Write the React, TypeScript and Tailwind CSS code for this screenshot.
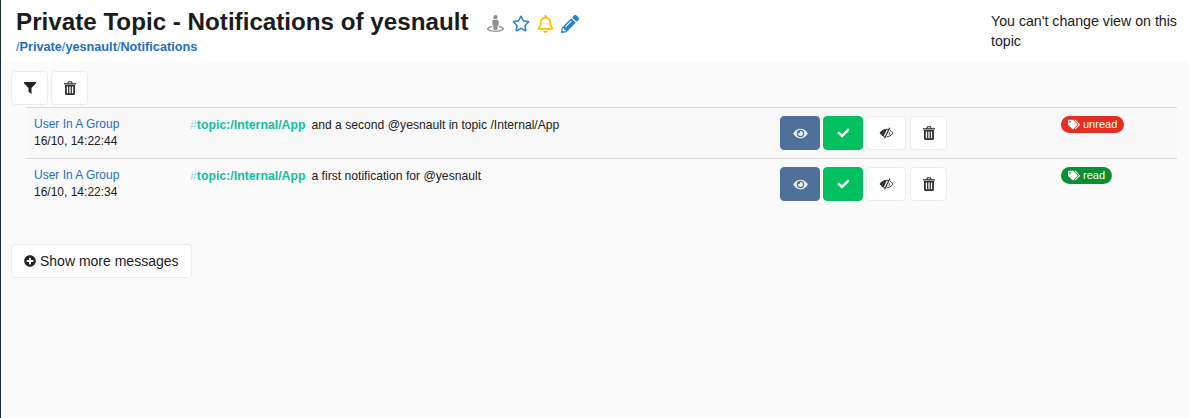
import { FaRegStar, FaRegBell, FaPencilAlt, FaEye, FaCheck, FaTags, FaPlusCircle, FaStreetView } from "react-icons/fa";
import type { ReactNode } from "react";

const mensajes = [
  {
    fecha: "16/10, 14:22:44",
    texto: "and a second @yesnault in topic /Internal/App",
    etiqueta: "unread",
    color: "bg-[#e52d20]",
    fila: "bg-[#f8f8f8]",
  },
  {
    fecha: "16/10, 14:22:34",
    texto: "a first notification for @yesnault",
    etiqueta: "read",
    color: "bg-[#0a8f32]",
    fila: "",
  },
];

function Boton({ children, className }: { children: ReactNode; className: string }) {
  return (
    <div className={`flex h-[34px] items-center justify-center rounded-[4px] border ${className}`}>
      {children}
    </div>
  );
}

// embudo macizo
function Filtro() {
  return (
    <svg viewBox="0 0 12 12" className="h-[12px] w-[12px] text-[#222]" fill="currentColor">
      <path d="M0 0h12v1.2L7.5 6v6L4.5 9.8V6L0 1.2z" />
    </svg>
  );
}

// papelera con barras, las de los paquetes son mas finas
function Papelera() {
  return (
    <svg viewBox="0 0 12 14" className="h-[14px] w-[12px] text-[#333]" fill="currentColor">
      <path d="M0 2.2h12v1.3H0z" />
      <path d="M3.8 2.5 4.5.7h3l.7 1.8" fill="none" stroke="currentColor" strokeWidth="1.1" />
      <path fillRule="evenodd" d="M1 4h10v8.5A1.5 1.5 0 0 1 9.500 14h-7A1.500 1.500 0 0 1 1 12.500zM2.800 5.500v6.800h1.300V5.500zM5.350 5.500v6.800h1.300V5.500zM7.900 5.500v6.800h1.300V5.500z" />
    </svg>
  );
}

// ojo tachado: mitad izquierda llena, mitad derecha en linea
function OjoTachado() {
  return (
    <svg viewBox="0 0 16 12" className="h-[12px] w-[15px] text-[#333]">
      <path d="M1 6C3 3.200 5.500 2 8 2s5 1.200 7 4c-2 2.800-4.500 4-7 4S3 8.800 1 6z" fill="none" stroke="currentColor" strokeWidth="1" />
      <path d="M1 6C3 3.200 5.500 2 8 2h.5L5 9.500C3.500 9 2.200 7.800 1 6z" fill="currentColor" />
      <path d="M10.500 4.500a3 3 0 0 1 0 3.500" fill="none" stroke="currentColor" strokeWidth="1" />
      <path d="M12.500.5 7 11.500" fill="none" stroke="#fff" strokeWidth="1" />
      <path d="M11.500.5 6 11.500" fill="none" stroke="currentColor" strokeWidth="1.300" />
    </svg>
  );
}

export default function App() {
  return (
    <div className="flex h-[418px] w-[1189px] overflow-hidden bg-[#fafafa] font-['Liberation_Sans',Arial,sans-serif] text-[#212121]">
      <div className="w-[1px] shrink-0 bg-[#1b2b3c]" />
      <div className="min-w-0 flex-1">
        <header className="flex h-[62px] bg-white">
          <div className="flex-1 pl-[15px]">
            <div className="flex h-[38px] items-center">
              <h1 className="mt-[5px] text-[24.2px] leading-[30px] font-bold text-[#1b1c1d]">
                Private Topic - Notifications of yesnault
              </h1>
              <div className="mt-[9px] ml-[19px] flex items-center">
                <FaStreetView className="h-[19px] w-[17px] text-[#8f8f8f]" />
                <FaRegStar className="ml-[8px] h-[17px] w-[18px] text-[#2185d0]" />
                <FaRegBell className="ml-[7px] h-[18px] w-[17px] text-[#fbbd08]" />
                <FaPencilAlt className="ml-[7px] h-[18px] w-[18px] text-[#2185d0]" />
              </div>
            </div>
            <div className="mt-[2px] text-[12.7px] leading-[14px] font-bold text-[#1e70bf]">
              <span className="font-normal">/</span>Private<span className="font-normal">/</span>yesnault<span className="font-normal">/</span>Notifications
            </div>
          </div>
          <div className="w-[198px] pt-[11px] text-[14.2px] leading-[20px]">
            You can't change view on this topic
          </div>
        </header>

        <div className="flex gap-[3px] pt-[9px] pl-[10px]">
          <Boton className="w-[37px] border-[#ececec] bg-white">
            <Filtro />
          </Boton>
          <Boton className="w-[37px] border-[#ececec] bg-white">
            <Papelera />
          </Boton>
        </div>

        <div className="mt-[2px] ml-[25px] mr-[12px] border-t border-[#dcdcdc]">
          {mensajes.map((m, i) => (
            <div
              key={m.fecha}
              className={`flex h-[51px] text-[12px] ${m.fila} ${i === 0 ? "border-b border-[#dcdcdc]" : ""}`}
            >
              <div className="w-[164px] pt-[8px] pl-[8px] leading-[17px]">
                <div className="text-[#1e70bf]">User In A Group</div>
                <div>{m.fecha}</div>
              </div>
              <div className="w-[590px] pt-[10px] leading-[15px]">
                <span className="text-[12.3px] font-bold text-[#12bf9f]">
                  <span className="font-normal text-[#9fdccf]">#</span>topic:/Internal/App
                </span>
                <span className="ml-[6px] text-[12.15px]">{m.texto}</span>
              </div>
              <div className="flex w-[281px] gap-[3px] pt-[8px]">
                <Boton className="w-[40px] border-[#4e7099] bg-[#4e7099]">
                  <FaEye className="h-[13px] w-[15px] text-[#e6ebf1]" />
                </Boton>
                <Boton className="w-[40px] border-[#00c060] bg-[#00c060]">
                  <FaCheck className="h-[12px] w-[13px] text-white" />
                </Boton>
                <Boton className="w-[40px] border-[#ececec] bg-white">
                  <OjoTachado />
                </Boton>
                <Boton className="ml-[1px] w-[37px] border-[#ececec] bg-white">
                  <Papelera />
                </Boton>
              </div>
              <div className="pt-[8px]">
                <span className={`flex h-[17px] items-center gap-[3px] rounded-full pr-[7px] pl-[7px] text-[11px] text-white ${m.color}`}>
                  <FaTags className="h-[11px] w-[12px] text-white" />
                  {m.etiqueta}
                </span>
              </div>
            </div>
          ))}
        </div>

        <div className="mt-[34px] ml-[10px] flex h-[34px] w-[181px] items-center rounded-[4px] border border-[#ececec] bg-white pl-[12px] text-[14px]">
          <FaPlusCircle className="h-[12px] w-[12px] text-[#222]" />
          <span className="ml-[4px]">Show more messages</span>
        </div>
      </div>
    </div>
  );
}
